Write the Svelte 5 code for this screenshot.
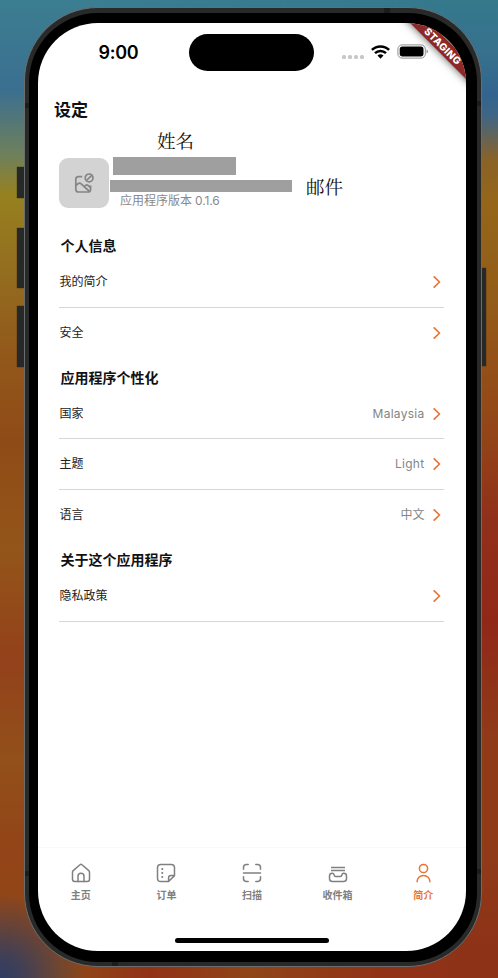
<script>
  const groups = [
    { title: '个人信息', rows: [{ label: '我的简介' }, { label: '安全' }] },
    {
      title: '应用程序个性化',
      rows: [
        { label: '国家', value: 'Malaysia' },
        { label: '主题', value: 'Light' },
        { label: '语言', value: '中文' },
      ],
    },
    { title: '关于这个应用程序', rows: [{ label: '隐私政策', line: true }] },
  ];
  const tabs = [
    { id: 'home', label: '主页' },
    { id: 'orders', label: '订单' },
    { id: 'scan', label: '扫描' },
    { id: 'inbox', label: '收件箱' },
    { id: 'profile', label: '简介' },
  ];
</script>

<div class="desktop">
  <i class="key k1"></i><i class="key k2"></i><i class="key k3"></i><i class="key k4"></i>
  <div class="phone">
    <i class="band b1"></i><i class="band b2"></i><i class="band b3"></i><i class="band b4"></i><i class="band b5"></i><i class="band b6"></i>
    <div class="bezel">
      <div class="screen">
        <header class="status">
          <span class="time">9:00</span>
          <span class="island"></span>
          <span class="signals">
            <span class="dots"><i></i><i></i><i></i><i></i></span>
            <svg class="wifi" width="19" height="14" viewBox="0 0 19 14">
              <g fill="none" stroke="#000" stroke-width="2.5">
                <path d="M.9 4.9a12.3 12.3 0 0 1 17.2 0" />
                <path d="M4 8.2a7.8 7.8 0 0 1 11 0" />
              </g>
              <path d="M6.500 10.600a4.300 4.300 0 0 1 6 0L9.500 13.700z" />
            </svg>
            <svg class="battery" width="32" height="15" viewBox="0 0 32 15">
              <rect x=".9" y=".9" width="27.400" height="13.200" rx="4.200" fill="none" stroke="#8e8e8e" />
              <rect x="2.700" y="2.600" width="23.800" height="9.800" rx="2.700" />
              <path d="M29.500 5.400q1.500.5 1.500 2.100t-1.500 2.100z" fill="#999" />
            </svg>
          </span>
        </header>
        <div class="ribbon">STAGING</div>
        <main>
          <h1>设定</h1>
          <section class="account">
            <div class="avatar">
              <svg width="20" height="20" viewBox="0 0 20 20" fill="none" stroke="#858585" stroke-width="1.700" stroke-linejoin="round">
                <path d="M8.200 3.700H4.300Q1.800 3.700 1.800 6.200v10q0 2.800 2.800 2.800h9.200q2.800 0 2.800-2.800v-3.600" />
                <path d="M2 12.400l2.300-1.900q1.300-1 2.600.1l8.600 7.900M10 13.600l1.600-1.200q1.300-.9 2.500.1l2.400 2" />
                <circle cx="15.100" cy="4.900" r="3.900" />
                <path d="M12.400 7.500l5.400-5.200" />
              </svg>
            </div>
            <div class="details">
              <div class="mask name"></div>
              <div class="mask mail"></div>
              <p>应用程序版本 <span>0.1.6</span></p>
            </div>
            <span class="note n1">姓名</span>
            <span class="note n2">邮件</span>
          </section>
          {#each groups as group}
            <section class="group">
              <h2>{group.title}</h2>
              {#each group.rows as row}
                <div class="row" class:line={row.line}>
                  <span>{row.label}</span>
                  <span class="end">
                    {#if row.value}<span class="value" class:latin={row.value !== '中文'}>{row.value}</span>{/if}
                    <svg width="8" height="12" viewBox="0 0 8 12" fill="none" stroke="#e87536" stroke-width="1.700" stroke-linecap="round" stroke-linejoin="round"><path d="M1.200.9L6.500 6 1.200 11.100" /></svg>
                  </span>
                </div>
              {/each}
            </section>
          {/each}
        </main>
        <nav>
          {#each tabs as tab}
            <div class="tab" class:active={tab.id === 'profile'}>
              <svg width="20" height="20" viewBox="0 0 20 20" fill="none" stroke="currentColor" stroke-width="1.500" stroke-linecap="round" stroke-linejoin="round">
                {#if tab.id === 'home'}
                  <path d="M1.500 9.200Q1.500 8.200 2.200 7.600L9 1.700q1-.9 2 0l6.800 5.900q.7.600.7 1.600v7.100q0 2.200-2.200 2.200H3.700q-2.200 0-2.200-2.200z" />
                  <path d="M7 18.500v-5.200q0-3 3-3t3 3v5.200" />
                {:else if tab.id === 'orders'}
                  <path d="M12.600 18.500H4.800q-3.300 0-3.300-3.300V4.800q0-3.300 3.300-3.300h10.400q3.300 0 3.300 3.300v7.800l-5.900 5.900v-3.600q0-2.300 2.300-2.300h3.600" />
                  <path d="M6.200 6h.1M6.200 10h.1M6.200 14h.1" stroke-width="2" />
                {:else if tab.id === 'scan'}
                  <path d="M1.500 6.200V4.500q0-3 3-3h1.700M13.800 1.500h1.700q3 0 3 3v1.700M18.500 13.800v1.700q0 3-3 3h-1.700M6.200 18.500H4.500q-3 0-3-3v-1.700M1.500 10h17" />
                {:else if tab.id === 'inbox'}
                  <path d="M3 4.500h14M3 7.500h14" stroke-linecap="butt" />
                  <path d="M4.300 10.300q-2.800 0-2.800 2.700v2.400q0 3.100 3.100 3.100h10.800q3.100 0 3.100-3.100V13q0-2.700-2.800-2.700-1.500 0-1.700 1.300-.3 2-1.700 2H7.700q-1.400 0-1.700-2-.2-1.300-1.700-1.300z" />
                {:else}
                  <circle cx="10.500" cy="5.500" r="4.100" />
                  <path d="M4.100 18.700c0-3.600 2.800-6.200 6.400-6.200s6.400 2.600 6.400 6.200" />
                {/if}
              </svg>
              <span>{tab.label}</span>
            </div>
          {/each}
          <i class="homebar"></i>
        </nav>
      </div>
    </div>
  </div>
</div>

<style>
  :global(body) { margin: 0; overflow: hidden; }
  .desktop {
    position: relative; width: 498px; height: 978px; box-sizing: border-box; padding: 7px 0 0 24px; overflow: hidden;
    font-family: "Noto Sans", "Noto Sans CJK SC", sans-serif;
    background:
      radial-gradient(circle at 0 100%, #2f3d64 0, #2f3d64cc 25px, #2f3d6400 85px),
      linear-gradient(90deg, #8e4a17 0, #8e4b17 60px, #913217 150px, #8f4518 250px, #913217 380px, #8d3217 498px) 0 950px / 498px 28px no-repeat,
      linear-gradient(180deg, #3b7e91 0, #3b6f90 90px, #6f805b 155px, #96811f 195px, #947020 260px, #92571a 360px, #8f4b17 440px, #935519 550px, #93411a 660px, #92501a 760px, #934418 850px, #8e4a17 978px);
  }
  .desktop::before {
    content: ""; position: absolute; inset: 0 0 28px 100px;
    background: linear-gradient(180deg, #35798c 0, #36708d 55px, #33648f 95px, #3f6585 115px, #8a6228 160px, #94661a 200px, #935c18 300px, #934318 440px, #90301a 520px, #902818 620px, #8f3b18 740px, #8f3b18 850px, #8d3217 950px);
    -webkit-mask-image: linear-gradient(90deg, transparent, #000 350px);
    mask-image: linear-gradient(90deg, transparent, #000 350px);
  }
  .key { position: absolute; background: #272828; width: 7px; left: 17px; box-shadow: 0 0 1px #222; }
  .k1 { top: 167px; height: 31px; }
  .k2 { top: 228px; height: 60px; }
  .k3 { top: 306px; height: 61px; }
  .k4 { top: 268px; height: 98px; left: 481px; width: 5px; }
  .phone { position: relative; width: 458px; height: 960px; box-sizing: border-box; padding: 5px 4px 4px; border: 1px solid #6b6d6d; border-radius: 74px; background: #282929; }
  .band { position: absolute; background: #1b1c1c; }
  .b1 { left: 0; top: 95px; width: 5px; height: 5px; }
  .b2 { right: 0; top: 93px; width: 5px; height: 5px; }
  .b3 { right: 91px; top: 0; width: 6px; height: 5px; }
  .b4 { left: 87px; bottom: 0; width: 6px; height: 5px; }
  .b5 { left: 0; bottom: 90px; width: 5px; height: 5px; }
  .b6 { right: 0; bottom: 92px; width: 5px; height: 5px; }
  .bezel { position: relative; height: 949px; box-sizing: border-box; padding: 10px 10px 11px 9px; background: #000; border-radius: 69px; }
  .screen { position: relative; display: flex; flex-direction: column; height: 928px; width: 428px; overflow: hidden; background: #fff; border-radius: 60px; }
  .status { display: flex; height: 59px; flex: none; }
  .time { width: 151.400px; flex: none; padding-left: 60.500px; box-sizing: border-box; font: 600 18px/59px Inter, sans-serif; letter-spacing: -.3px; }
  .island { width: 125px; height: 37px; margin-top: 11px; border-radius: 19px; background: #000; flex: none; }
  .signals { display: flex; margin-left: 27.500px; }
  .dots { display: flex; gap: 2px; margin-top: 32px; }
  .dots i { width: 4px; height: 4px; border-radius: 1.500px; background: #c8c8c8; }
  .wifi { margin: 21.500px 0 0 7px; }
  .battery { margin: 21px 0 0 7px; }
  .ribbon { position: absolute; left: 355px; top: 15.500px; width: 100px; height: 14px; transform: rotate(45deg); background: #8c2926; color: #fff; font: 800 10px/14px Inter, sans-serif; letter-spacing: .3px; text-align: center; box-shadow: 0 0 8px #000a; }
  main { flex: 1; padding: 0 21px 0 21.400px; }
  h1 { margin: 13px 0 0 -5.500px; font-size: 17px; line-height: 30px; font-weight: 600; color: #111; }
  .account { position: relative; display: flex; height: 50px; margin-top: 33.300px; }
  .avatar { width: 50px; height: 50px; border-radius: 9px; background: #d3d3d3; display: flex; align-items: center; justify-content: center; }
  .details { padding-left: 2px; }
  .mask { background: #9f9f9f; }
  .name { width: 123px; height: 18px; margin: -1px 0 0 2px; }
  .mail { width: 182px; height: 12px; margin: 5px 0 0 -1px; }
  .details p { margin: 0 0 0 8.500px; font-size: 12px; line-height: 17px; color: #898989; white-space: nowrap; }
  .details p span { font: 400 12px Inter, sans-serif; letter-spacing: -.1px; }
  .note { position: absolute; font: 18.500px/22px "Noto Serif CJK SC", "Noto Sans CJK SC", serif; color: #111; }
  .n1 { left: 97.500px; top: -29.300px; }
  .n2 { left: 246.500px; top: 16.700px; }
  .group h2 { margin: 0; padding-left: 1px; font-size: 14px; line-height: 22px; font-weight: 700; color: #111; }
  .group { padding-top: 27px; }
  .group + .group { padding-top: 8.700px; }
  .row { display: flex; justify-content: space-between; height: 50.500px; box-sizing: border-box; font-size: 12px; line-height: 50px; color: #222; border-bottom: 1px solid #d6d6d6; width: 385px; }
  .row:last-child:not(.line) { border-color: transparent; }
  .end { display: flex; align-items: center; padding-right: 3px; }
  .value { margin-right: 9px; color: #858585; font-family: Inter, "Noto Sans CJK SC", sans-serif; }
  .latin { letter-spacing: .25px; }
  nav { position: relative; display: flex; height: 104px; box-sizing: border-box; padding-top: 15.400px; border-top: 1px solid #f8f8f8; }
  .tab { flex: 1; display: flex; flex-direction: column; align-items: center; color: #808080; font-size: 10px; font-weight: 600; line-height: 15px; }
  .tab span { margin-top: 4.500px; }
  .tab.active { color: #e87536; }
  .homebar { position: absolute; left: 137px; bottom: 8px; width: 154px; height: 5px; border-radius: 3px; background: #000; }
</style>
